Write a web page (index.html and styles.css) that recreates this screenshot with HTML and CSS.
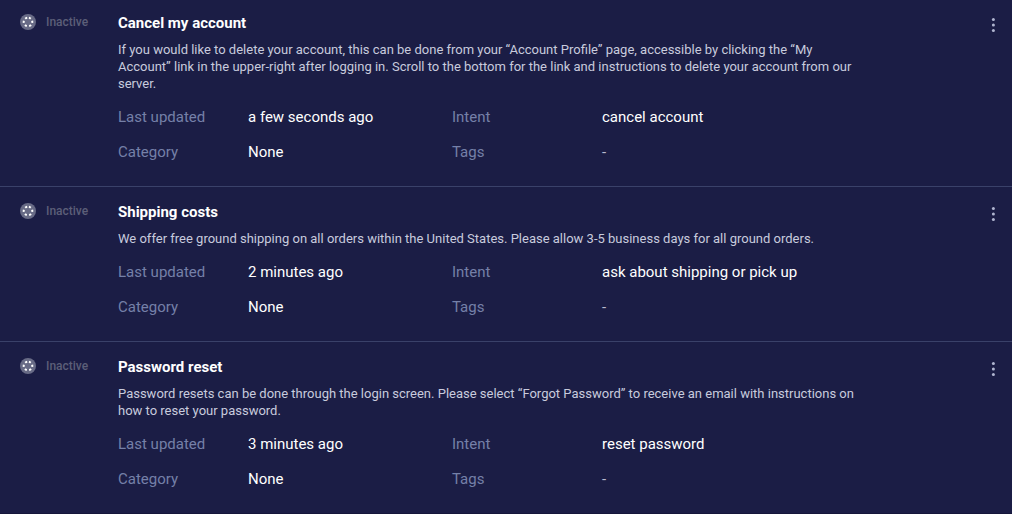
FILE: index.html
```html
<!DOCTYPE html>
<html lang="en">
<head>
<meta charset="utf-8">
<title>Answers</title>
<link rel="stylesheet" href="styles.css">
</head>
<body>
<svg class="sprite" aria-hidden="true">
  <symbol id="status" viewBox="0 0 16 16">
    <circle cx="8" cy="8" r="8" fill="#686b86"/>
    <circle cx="8" cy="8" r="4.3" fill="none" stroke="#fff" stroke-width="2" stroke-dasharray="2.1 2.4" transform="rotate(-78 8 8)"/>
  </symbol>
  <symbol id="dots" viewBox="0 0 4 14">
    <g fill="#b0b5d0"><circle cx="2.4" cy="1.5" r="1.5"/><circle cx="2.4" cy="7" r="1.5"/><circle cx="2.4" cy="12.5" r="1.5"/></g>
  </symbol>
</svg>
<main class="list">
  <article class="answer">
    <div class="status"><svg class="status-icon" aria-hidden="true"><use href="#status"/></svg>Inactive</div>
    <div class="content">
      <h2 class="title">Cancel my account</h2>
      <p class="text">If you would like to delete your account, this can be done from your “Account Profile” page, accessible by clicking the “My Account” link in the upper-right after logging in. Scroll to the bottom for the link and instructions to delete your account from our server.</p>
      <dl class="meta">
        <dt>Last updated</dt><dd>a few seconds ago</dd><dt>Intent</dt><dd>cancel account</dd>
        <dt>Category</dt><dd>None</dd><dt>Tags</dt><dd class="empty">-</dd>
      </dl>
    </div>
    <button class="more" type="button" aria-label="More actions"><svg class="dots" aria-hidden="true"><use href="#dots"/></svg></button>
  </article>
  <article class="answer">
    <div class="status"><svg class="status-icon" aria-hidden="true"><use href="#status"/></svg>Inactive</div>
    <div class="content">
      <h2 class="title">Shipping costs</h2>
      <p class="text">We offer free ground shipping on all orders within the United States. Please allow 3-5 business days for all ground orders.</p>
      <dl class="meta">
        <dt>Last updated</dt><dd>2 minutes ago</dd><dt>Intent</dt><dd>ask about shipping or pick up</dd>
        <dt>Category</dt><dd>None</dd><dt>Tags</dt><dd class="empty">-</dd>
      </dl>
    </div>
    <button class="more" type="button" aria-label="More actions"><svg class="dots" aria-hidden="true"><use href="#dots"/></svg></button>
  </article>
  <article class="answer">
    <div class="status"><svg class="status-icon" aria-hidden="true"><use href="#status"/></svg>Inactive</div>
    <div class="content">
      <h2 class="title">Password reset</h2>
      <p class="text">Password resets can be done through the login screen. Please select “Forgot Password” to receive an email with instructions on how to reset your password.</p>
      <dl class="meta">
        <dt>Last updated</dt><dd>3 minutes ago</dd><dt>Intent</dt><dd>reset password</dd>
        <dt>Category</dt><dd>None</dd><dt>Tags</dt><dd class="empty">-</dd>
      </dl>
    </div>
    <button class="more" type="button" aria-label="More actions"><svg class="dots" aria-hidden="true"><use href="#dots"/></svg></button>
  </article>
</main>
</body>
</html>
```
FILE: styles.css
```css
* { box-sizing: border-box; }
body { margin: 0; background: #1b1d45; color: #fff; font-family: Roboto, sans-serif; }
.sprite { position: absolute; width: 0; height: 0; }
.answer { display: grid; grid-template-columns: 98px minmax(0, 1fr) 24px; padding: 16px 7px 24px 20px; border-bottom: 1px solid #3a4169; }
.answer:first-child { padding-top: 14px; }
.answer:last-child { border-bottom-color: #15163a; }
.status { display: flex; align-items: center; gap: 10px; height: 16px; font-size: 12px; font-weight: 500; color: #5c5f78; }
.status-icon { width: 16px; height: 16px; }
.title { margin: 0; font-size: 15px; line-height: 18px; font-weight: 700; }
.text { max-width: 744px; margin: 9px 0 0; font-size: 13px; line-height: 17px; color: #c8cbdd; }
.meta { display: grid; grid-template-columns: 130px 204px 150px 1fr; row-gap: 15px; margin: 15px 0 0; font-size: 15px; line-height: 20px; }
.meta dt { color: #7580a8; }
.meta dd { margin: 0; }
.meta .empty { color: #b8bbd0; }
.more { display: flex; justify-content: center; align-items: center; width: 24px; height: 22px; padding: 0; border: 0; background: none; }
.dots { width: 4px; height: 14px; }
```
